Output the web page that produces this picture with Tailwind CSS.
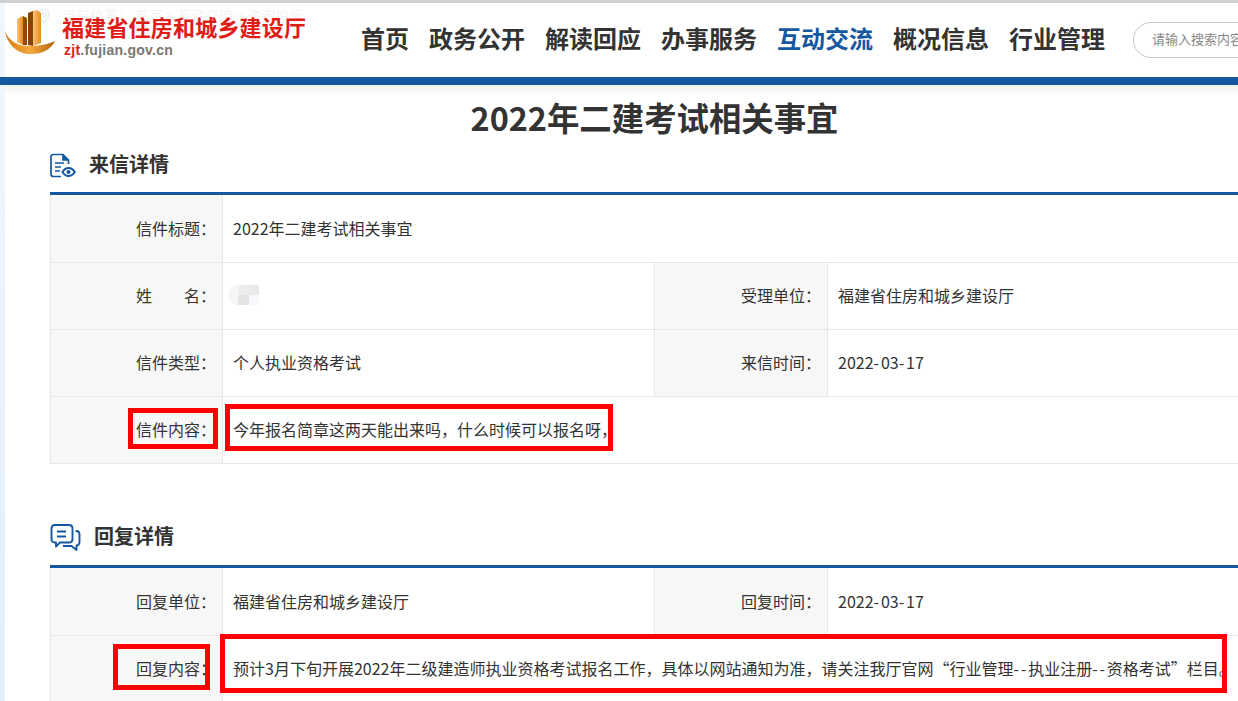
<!DOCTYPE html>
<html lang="zh-CN">
<head>
  <meta charset="UTF-8" />
  <meta name="viewport" content="width=device-width, initial-scale=1.0"/>
  <title>2022年二建考试相关事宜</title>
  <script src="https://cdn.jsdelivr.net/npm/@tailwindcss/browser@4"></script>
</head>

<body class="relative h-[701px] w-[1238px] overflow-hidden bg-white font-['Noto_Sans_CJK_SC','Noto_Sans',sans-serif] text-[#333]">
  <!-- page strip down the left edge -->
  <div class="absolute left-0 top-[3px] h-[698px] w-[5px] bg-gradient-to-b from-[#f2f7fd] to-[#e3eefb]"></div>

  <header class="relative h-[85px] border-t-[3px] border-b-[8px] border-t-[#cfcfcf] border-b-[#14589f]">
    <div class="flex h-[74px]">
      <div class="relative w-[361px] shrink-0">
        <!-- faint breadcrumb showing through the header -->
        <svg class="absolute left-[37px] top-[5px]" width="14" height="17" viewBox="0 0 14 17" fill="none" stroke="#e6edf6" stroke-width="1.500">
          <path d="M7 15C4 11 2 9 2 6.500C2 3.500 4 1.500 7 1.500C10 1.500 12 3.500 12 6.500C12 9 10 11 7 15Z"/>
          <circle cx="7" cy="6.500" r="2"/>
        </svg>
        <div class="absolute left-[62px] top-[2px] whitespace-nowrap text-[14px] leading-[20px] text-[#f3f3f3]">当前位置： 首页 &gt; 互动交流 &gt; 咨询投诉</div>
        <svg class="absolute left-[4px] top-[7px]" width="52" height="46" viewBox="0 0 52 46">
          <defs>
            <linearGradient id="bowl" x1="0" y1="0" x2="1" y2="0">
              <stop offset="0" stop-color="#d67d14"/>
              <stop offset="0.5" stop-color="#f3a83f"/>
              <stop offset="1" stop-color="#b8650e"/>
            </linearGradient>
            <linearGradient id="tower" x1="0" y1="0" x2="1" y2="0">
              <stop offset="0" stop-color="#f9c277"/>
              <stop offset="1" stop-color="#e58a1d"/>
            </linearGradient>
          </defs>
          <path d="M1 21C5 32 15 36 25 36C35 36 45 34 51 31C46 41 37 44 26 44C13 44 3 34 1 21Z" fill="url(#bowl)"/>
          <path d="M13 9L19 6V35L13 32Z" fill="url(#tower)"/>
          <path d="M19 6L23 8V35H19Z" fill="#8f4a08"/>
          <path d="M24 3L29 1V36L24 35Z" fill="#8a4307"/>
          <path d="M29 1L33 0L37 3V33L29 36Z" fill="url(#tower)"/>
        </svg>
        <div class="absolute left-[62px] top-[9px] whitespace-nowrap text-[22px] leading-[28px] font-bold tracking-[0.2px] text-[#e01c17]">福建省住房和城乡建设厅</div>
        <div class="absolute left-[64px] top-[38px] whitespace-nowrap font-['Liberation_Sans',sans-serif] text-[14px] leading-[18px] font-bold tracking-[0.25px] text-[#777]"><span class="text-[#d8241d]">zjt</span>.fujian.gov.cn</div>
      </div>
      <nav class="flex h-[70px] items-center gap-5 text-[24px] font-bold whitespace-nowrap">
        <a>首页</a>
        <a>政务公开</a>
        <a>解读回应</a>
        <a>办事服务</a>
        <a class="text-[#14589f]">互动交流</a>
        <a>概况信息</a>
        <a>行业管理</a>
      </nav>
      <div class="ml-7 mt-[19px] flex h-[36px] w-[300px] shrink-0 items-center rounded-full border border-[#c8c8c8] pb-[2px] pl-[18px] text-[13px] whitespace-nowrap text-[#888]">请输入搜索内容</div>
    </div>
  </header>
  <div class="h-[10px] -mb-[10px] bg-gradient-to-b from-[#f1f1f1] to-white"></div>

  <main class="relative pl-[50px]">
    <h1 class="flex h-[64px] items-center justify-center pl-[21px] text-[32.4px] font-bold">2022年二建考试相关事宜</h1>

    <section class="w-[1300px]">
      <div class="flex h-[43px] items-start pt-[3px]">
        <svg class="mt-[1px]" width="26" height="25" viewBox="0 0 26 25" fill="none" stroke="#14589f" stroke-width="1.700">
          <path d="M10 1.500H3.500C2 1.500 1 2.500 1 4V21C1 22.500 2 23.500 3.500 23.500H11"/>
          <path d="M10 1.500H13L18.500 7V11"/>
          <path d="M13 2V7H18" fill="#14589f"/>
          <path d="M5 10H14M5 14H11M5 18H10" stroke-width="1.500"/>
          <path d="M12.500 19C14 16.500 16 15 18.500 15C21 15 23.200 16.500 24.800 19C23.200 21.500 21 23 18.500 23C16 23 14 21.500 12.500 19Z" fill="white" stroke-width="2"/>
          <circle cx="18.500" cy="19" r="2" fill="#14589f" stroke="none"/>
        </svg>
        <h2 class="ml-[13px] text-[20px] leading-[23px] font-bold">来信详情</h2>
      </div>
      <div class="border-t-[3px] border-[#14589f] text-[16px] leading-[24px]">
        <div class="flex h-[67px] border-x border-[#e8e8e8]">
          <div class="flex w-[172px] shrink-0 items-center justify-end border-r border-[#e8e8e8] bg-[#f7f7f7] pr-[6px] pb-[2px]">信件标题：</div>
          <div class="flex items-center pb-[2px] pl-[10px]">2022年二建考试相关事宜</div>
        </div>
        <div class="flex h-[67px] border-x border-t border-[#e8e8e8]">
          <div class="flex w-[172px] shrink-0 items-center justify-end border-r border-[#e8e8e8] bg-[#f7f7f7] pr-[6px] pb-[2px]">姓&emsp;&emsp;名：</div>
          <div class="flex w-[432px] shrink-0 items-center border-r border-[#e8e8e8] pb-[2px] pl-[5px]">
            <!-- blurred-out name -->
            <div class="grid h-[20px] w-[31px] grid-cols-[10px_11px_10px] grid-rows-2">
              <div class="row-span-2 rounded-l-full bg-[#f6f6f6]"></div>
              <div class="bg-[#eeeeee]"></div>
              <div class="bg-[#e9e9e9]"></div>
              <div class="bg-[#e4e4e4]"></div>
              <div class="bg-[#f8f9fd]"></div>
            </div>
          </div>
          <div class="flex w-[173px] shrink-0 items-center justify-end border-r border-[#e8e8e8] bg-[#f7f7f7] pr-[6px] pb-[2px]">受理单位：</div>
          <div class="flex items-center pb-[2px] pl-[10px]">福建省住房和城乡建设厅</div>
        </div>
        <div class="flex h-[67px] border-x border-t border-[#e8e8e8]">
          <div class="flex w-[172px] shrink-0 items-center justify-end border-r border-[#e8e8e8] bg-[#f7f7f7] pr-[6px] pb-[2px]">信件类型：</div>
          <div class="flex w-[432px] shrink-0 items-center border-r border-[#e8e8e8] pb-[2px] pl-[10px]">个人执业资格考试</div>
          <div class="flex w-[173px] shrink-0 items-center justify-end border-r border-[#e8e8e8] bg-[#f7f7f7] pr-[6px] pb-[2px]">来信时间：</div>
          <div class="flex items-center pb-[2px] pl-[10px]"><span>2022<span class="tracking-[1.800px]">-</span>03<span class="tracking-[1.800px]">-</span>17</span></div>
        </div>
        <div class="flex h-[68px] border border-[#e8e8e8]">
          <div class="flex w-[172px] shrink-0 items-center justify-end border-r border-[#e8e8e8] bg-[#f7f7f7] pr-[6px] pb-[2px]">信件内容：</div>
          <div class="flex items-center pb-[2px] pl-[10px]">今年报名简章这两天能出来吗，什么时候可以报名呀，</div>
        </div>
      </div>
    </section>

    <section class="mt-[60px] w-[1300px]">
      <div class="flex h-[41px] items-start">
        <svg class="mt-[-1px]" width="31" height="29" viewBox="0 0 31 29" fill="none" stroke="#14589f" stroke-width="1.900" stroke-linejoin="round">
          <path d="M4.500 2H19C21 2 22.500 3.500 22.500 5.500V16C22.500 18 21 19.500 19 19.500H10L6 23.500V19.500H4.500C2.500 19.500 1.500 18 1.500 16V5.500C1.500 3.500 2.500 2 4.500 2Z"/>
          <path d="M7 8.500H16M7 13.500H16" stroke-width="2"/>
          <path d="M25.500 8H26C28 8 29.500 9.500 29.500 11.500V19C29.500 21 28 22.500 26.500 22.500V27L21.500 23H13"/>
        </svg>
        <h2 class="ml-[13px] text-[20px] leading-[23px] font-bold">回复详情</h2>
      </div>
      <div class="border-t-[3px] border-[#14589f] text-[16px] leading-[24px]">
        <div class="flex h-[67px] border-x border-[#e8e8e8]">
          <div class="flex w-[172px] shrink-0 items-center justify-end border-r border-[#e8e8e8] bg-[#f7f7f7] pr-[6px] pb-[2px]">回复单位：</div>
          <div class="flex w-[432px] shrink-0 items-center border-r border-[#e8e8e8] pb-[2px] pl-[10px]">福建省住房和城乡建设厅</div>
          <div class="flex w-[173px] shrink-0 items-center justify-end border-r border-[#e8e8e8] bg-[#f7f7f7] pr-[6px] pb-[2px]">回复时间：</div>
          <div class="flex items-center pb-[2px] pl-[10px]"><span>2022<span class="tracking-[1.800px]">-</span>03<span class="tracking-[1.800px]">-</span>17</span></div>
        </div>
        <div class="flex h-[67px] border-x border-t border-[#e8e8e8]">
          <div class="flex w-[172px] shrink-0 items-center justify-end border-r border-[#e8e8e8] bg-[#f7f7f7] pr-[6px] pb-[2px]">回复内容：</div>
          <div class="flex items-center pb-[2px] pl-[10px] whitespace-nowrap"><span>预计3月下旬开展2022年二级建造师执业资格考试报名工作，具体以网站通知为准，请关注我厅官网“行业管理<span class="tracking-[1.800px]">--</span>执业注册<span class="tracking-[1.800px]">--</span>资格考试”栏目。</span></div>
        </div>
      </div>
    </section>
  </main>

  <!-- red annotation boxes drawn over the screenshot -->
  <div class="absolute left-[128px] top-[408px] h-[41px] w-[90px] border-[5px] border-[#ff0000]"></div>
  <div class="absolute left-[225px] top-[404px] h-[47px] w-[388px] border-[5px] border-[#ff0000]"></div>
  <div class="absolute left-[113px] top-[644px] h-[46px] w-[97px] border-[5px] border-[#ff0000]"></div>
  <div class="absolute left-[220px] top-[634px] h-[59px] w-[1007px] border-[5px] border-[#ff0000]"></div>
</body>
</html>
